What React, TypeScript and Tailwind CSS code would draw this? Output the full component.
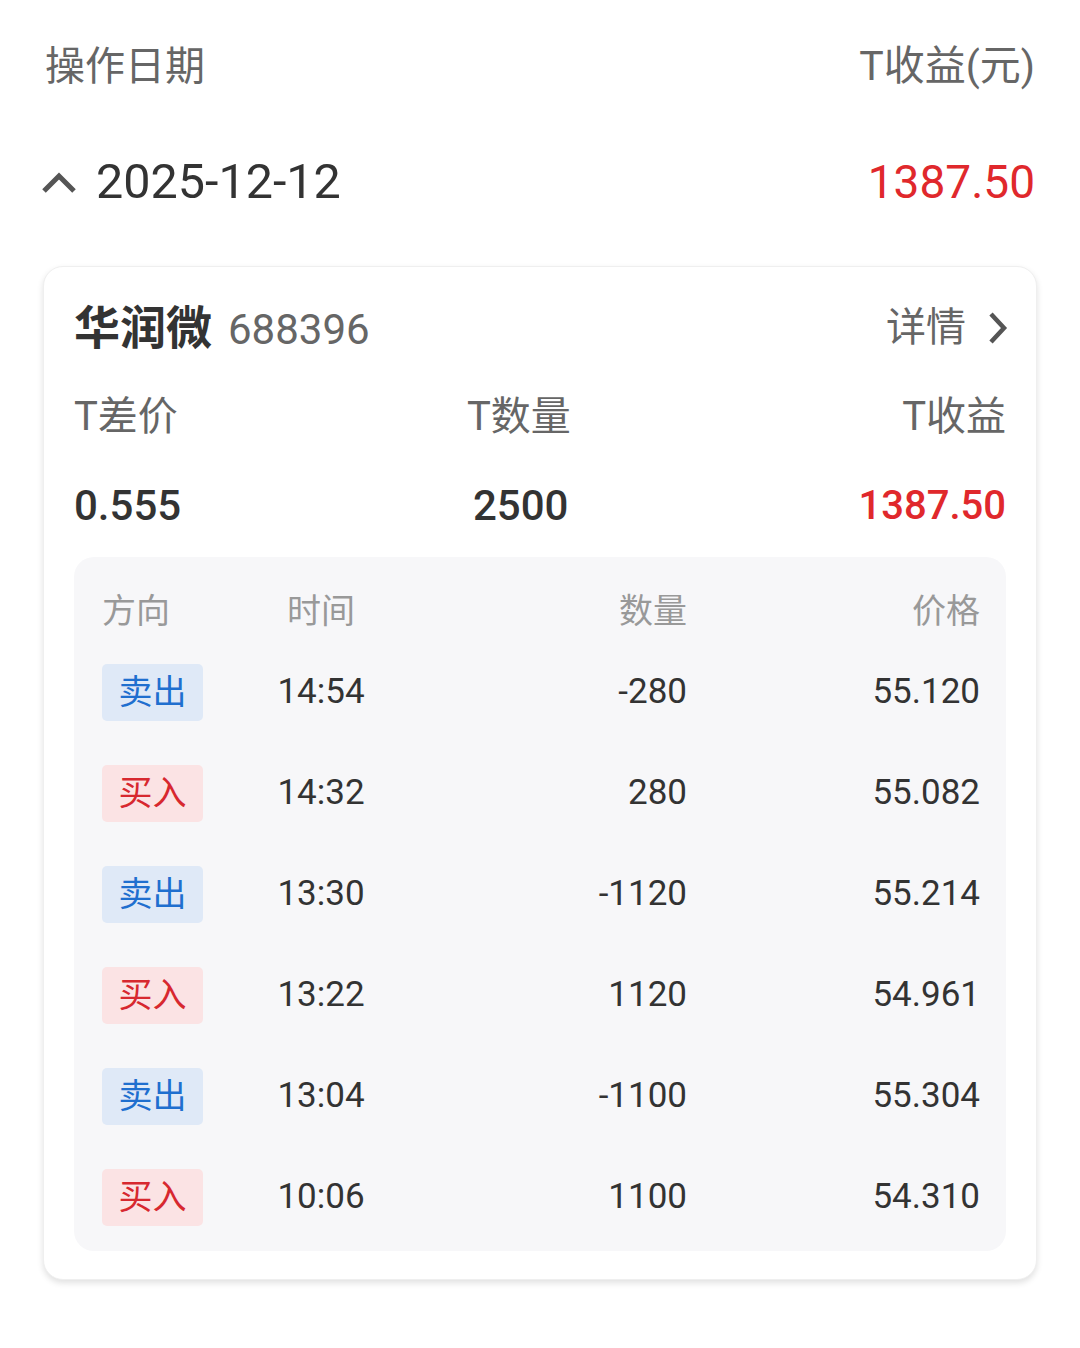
const font = "font-['Roboto','Noto_Sans_CJK_SC',sans-serif]";

type Trade = { side: "sell" | "buy"; time: string; qty: string; price: string };

const trades: Trade[] = [
  { side: "sell", time: "14:54", qty: "-280", price: "55.120" },
  { side: "buy", time: "14:32", qty: "280", price: "55.082" },
  { side: "sell", time: "13:30", qty: "-1120", price: "55.214" },
  { side: "buy", time: "13:22", qty: "1120", price: "54.961" },
  { side: "sell", time: "13:04", qty: "-1100", price: "55.304" },
  { side: "buy", time: "10:06", qty: "1100", price: "54.310" },
];

function SideTag({ side }: { side: Trade["side"] }) {
  if (side === "sell") {
    return (
      <span className="flex h-[57px] w-[101px] items-center justify-center rounded-[5px] bg-[#dfe9f7] text-[34px] text-[#1f6fcf]">
        卖出
      </span>
    );
  }
  return (
    <span className="flex h-[57px] w-[101px] items-center justify-center rounded-[5px] bg-[#fbe3e4] text-[34px] text-[#d7282f]">
      买入
    </span>
  );
}

export default function App() {
  return (
    <div className={`min-h-[1348px] w-[1080px] bg-white ${font}`}>
      {/* Column headers */}
      <div className="mt-[39px] flex h-[56px] items-center justify-between px-[45px] text-[40px] text-[#666]">
        <span>操作日期</span>
        <span className="text-[41px]">T收益(元)</span>
      </div>

      {/* Date row */}
      <div className="mt-[55px] flex h-[64px] items-center justify-between pl-[41px] pr-[45px]">
        <div className="flex items-center">
          <svg width="36" height="26" viewBox="0 0 36 26" className="mr-[19px]">
            <path d="M3 22 L18 7 L33 22" fill="none" stroke="#555" strokeWidth="5" />
          </svg>
          <span className="text-[48.5px] text-[#333]">2025-12-12</span>
        </div>
        <span className="text-[46px] text-[#e0282c]">1387.50</span>
      </div>

      {/* Stock card */}
      <div className="mx-[43px] mt-[52px] rounded-[20px] border border-[#efefef] bg-white px-[30px] pt-[33px] pb-[28px] shadow-[0_3px_6px_rgba(0,0,0,0.12)]">
        <div className="flex h-[56px] items-center justify-between">
          <div className="flex items-baseline">
            <span className="text-[46px] font-bold text-[#333]">华润微</span>
            <span className="ml-[16px] text-[42px] text-[#666]">688396</span>
          </div>
          <div className="flex items-center text-[40px] text-[#666]">
            <span>详情</span>
            <svg width="24" height="34" viewBox="0 0 24 34" className="ml-[20px] mr-[-4px]">
              <path d="M5 3 L18 17 L5 31" fill="none" stroke="#555" strokeWidth="4.5" />
            </svg>
          </div>
        </div>

        <div className="mt-[31px] grid h-[56px] grid-cols-[393px_1fr_1fr] items-center text-[40px] text-[#666]">
          <span>T差价</span>
          <span>T数量</span>
          <span className="text-right">T收益</span>
        </div>

        <div className="mt-[31px] grid h-[56px] grid-cols-[393px_1fr_1fr] items-center text-[42px] font-medium text-[#333]">
          <span>0.555</span>
          <span className="pl-[6px]">2500</span>
          <span className="text-right text-[40px] text-[#e0282c]">1387.50</span>
        </div>

        {/* Trade detail table */}
        <div className="mt-[27px] rounded-[20px] bg-[#f7f7f9] pl-[28px] pr-[26px] pt-[28px] pb-[3px]">
          <div className="grid h-[52px] grid-cols-[139px_160px_286px_1fr] items-center text-[34px] text-[#999]">
            <span>方向</span>
            <span className="text-center">时间</span>
            <span className="text-right">数量</span>
            <span className="text-right">价格</span>
          </div>
          <div className="mt-[5px]">
            {trades.map((t, i) => (
              <div
                key={i}
                className="grid h-[101px] grid-cols-[139px_160px_286px_1fr] items-center text-[35px] text-[#333]"
              >
                <SideTag side={t.side} />
                <span className="text-center">{t.time}</span>
                <span className="text-right">{t.qty}</span>
                <span className="text-right">{t.price}</span>
              </div>
            ))}
          </div>
        </div>
      </div>
    </div>
  );
}
